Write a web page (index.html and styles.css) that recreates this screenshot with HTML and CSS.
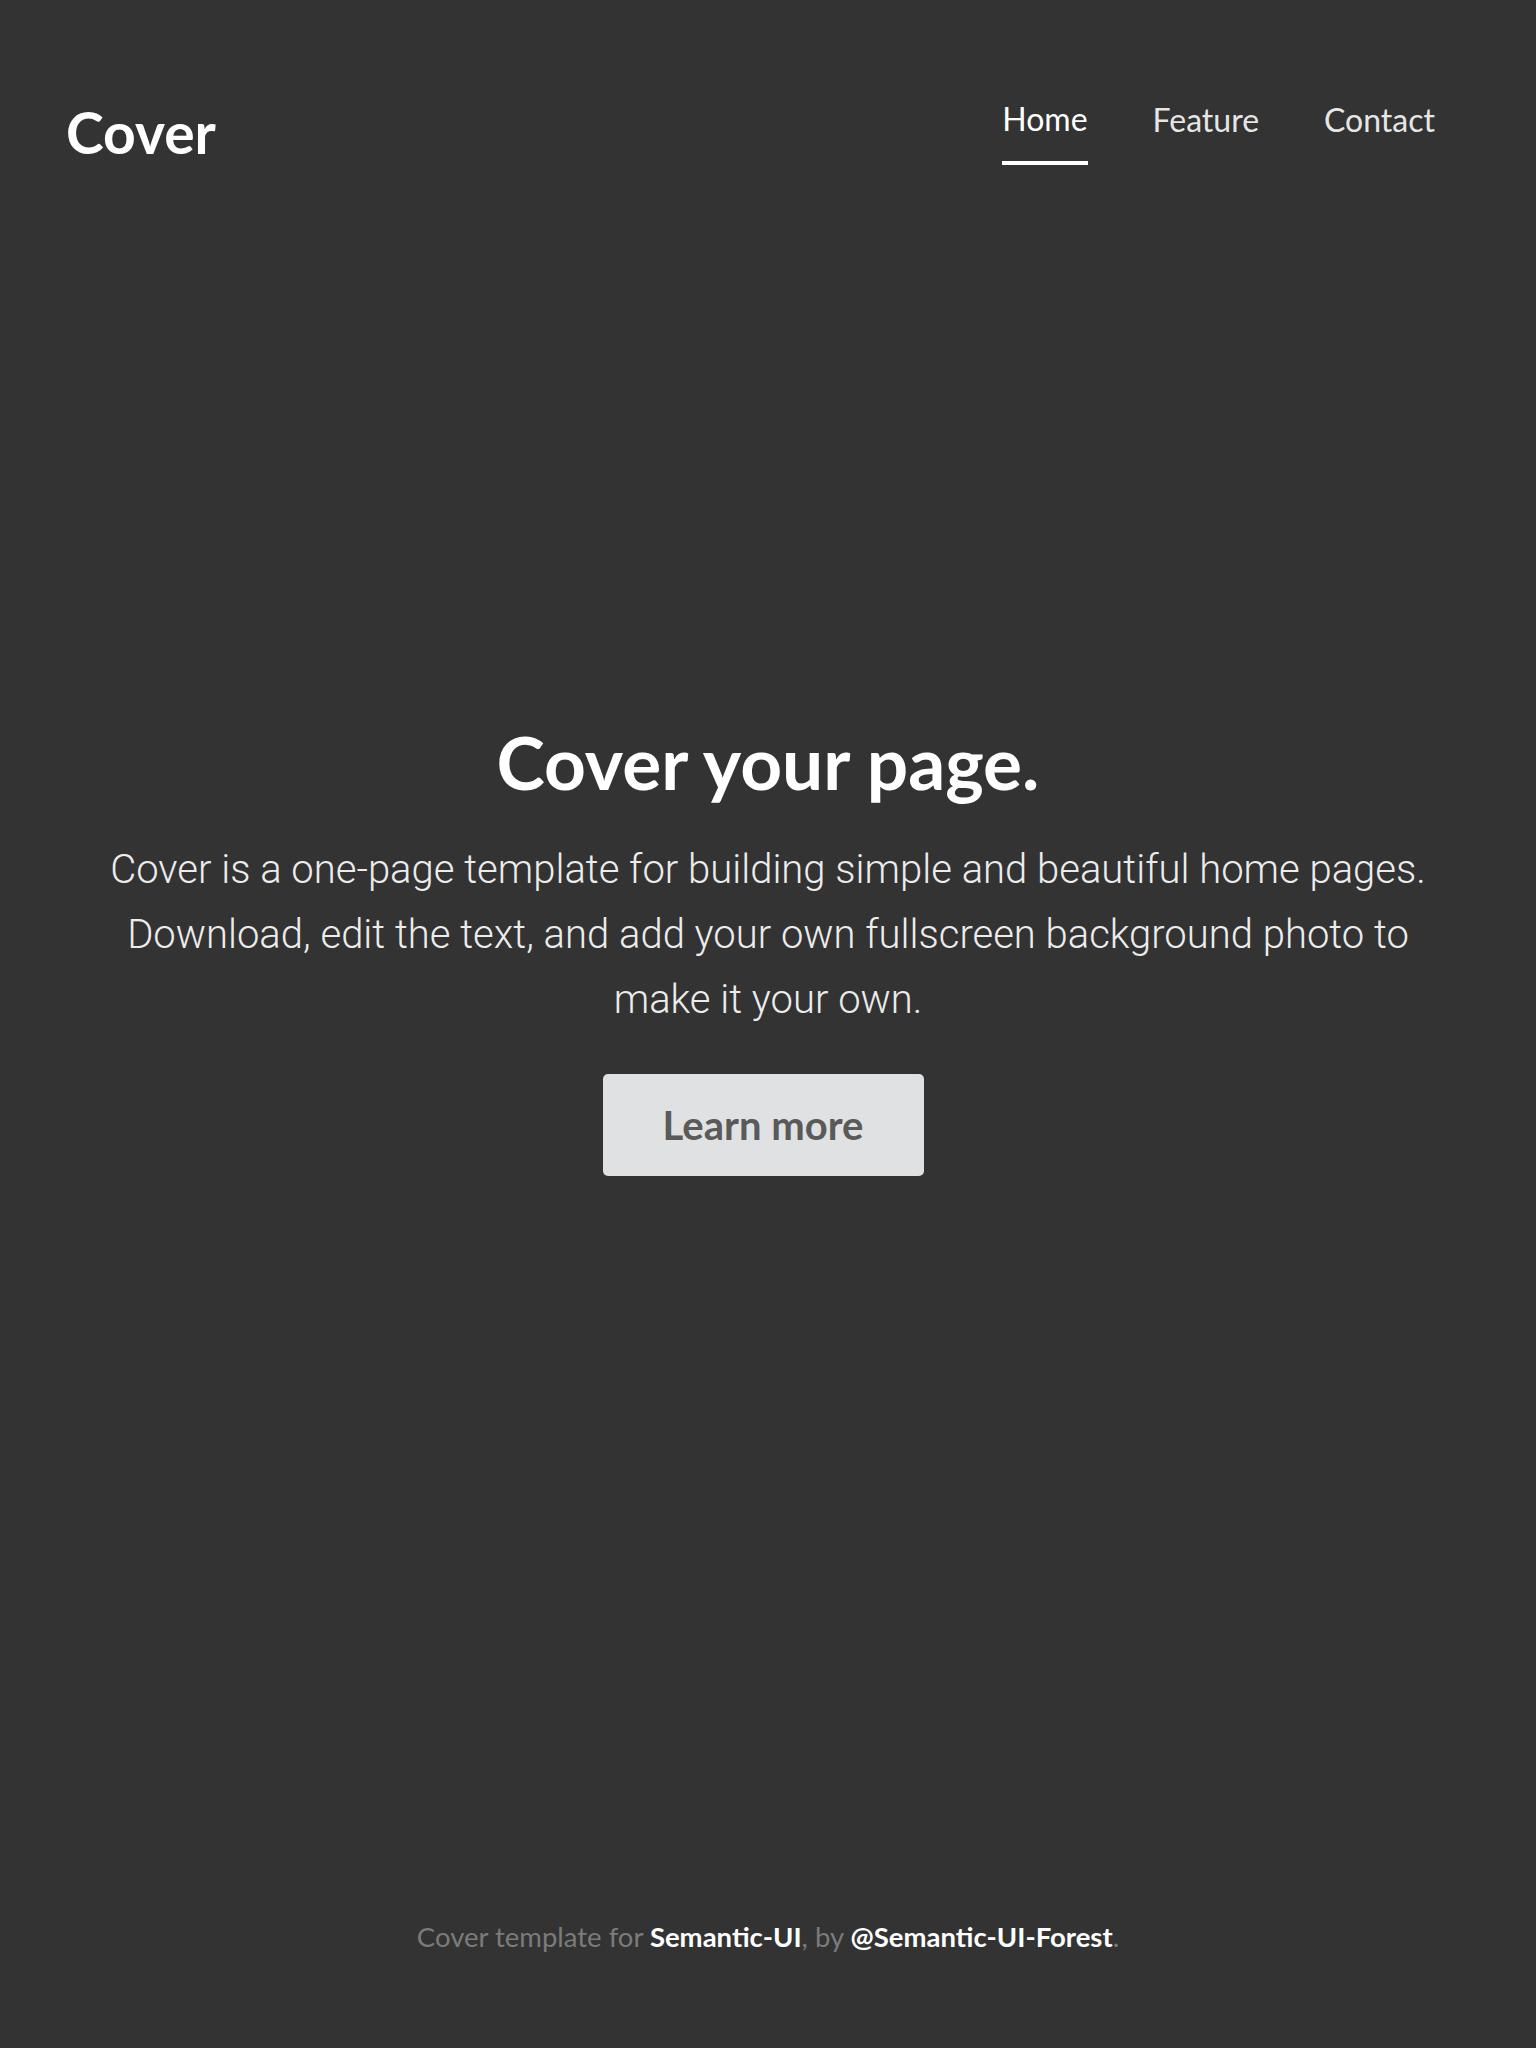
FILE: index.html
```html
<!DOCTYPE html>
<html lang="en">
<head>
<meta charset="utf-8">
<title>Cover</title>
<link rel="stylesheet" href="styles.css">
</head>
<body>
<div class="page">
  <header class="masthead">
    <h3 class="brand">Cover</h3>
    <nav class="nav">
      <a class="nav-item active" href="#">Home</a>
      <a class="nav-item" href="#">Feature</a>
      <a class="nav-item" href="#">Contact</a>
    </nav>
  </header>
  <main class="hero">
    <h1 class="hero-title">Cover your page.</h1>
    <p class="hero-text">Cover is a one-page template for building simple and beautiful home pages. Download, edit the text, and add your own fullscreen background photo to make it your own.</p>
    <a class="btn" href="#">Learn more</a>
  </main>
  <footer class="footer">
    <p>Cover template for <a href="#">Semantic-UI</a>, by <a href="#">@Semantic-UI-Forest</a>.</p>
  </footer>
</div>
</body>
</html>
```
FILE: styles.css
```css
html, body {
  margin: 0;
  padding: 0;
  background: #333333;
}
body {
  font-family: Lato, "Open Sans", sans-serif;
  color: #ffffff;
}
.page {
  min-height: 100vh;
  display: flex;
  flex-direction: column;
}
.masthead {
  display: flex;
  justify-content: space-between;
  align-items: flex-start;
  padding: 104px 101px 0 66px;
}
.brand {
  margin: 0;
  font-size: 57px;
  font-weight: 700;
  line-height: 1;
  color: #ffffff;
}
.nav {
  display: flex;
  gap: 65px;
  margin-top: -4px;
}
.nav-item {
  font-size: 32px;
  line-height: 1;
  color: #e6e6e6;
  text-decoration: none;
  padding: 4px 0 25px;
  border-bottom: 4px solid transparent;
}
.nav-item.active {
  color: #ffffff;
  border-bottom-color: #ffffff;
  padding-top: 3px;
}
.hero {
  flex: 1;
  display: flex;
  flex-direction: column;
  align-items: center;
  justify-content: center;
  text-align: center;
  padding: 0 100px 190px;
}
.hero-title {
  margin: 0 0 30px;
  font-size: 73px;
  font-weight: 700;
  line-height: 1.2;
}
.hero-text {
  max-width: 1335px;
  margin: 0 0 42px;
  font-family: Roboto, "Liberation Sans", sans-serif;
  font-weight: 300;
  font-size: 40px;
  line-height: 65px;
  color: #ececec;
}
.btn {
  display: inline-block;
  width: 321px;
  box-sizing: border-box;
  margin-right: 10px;
  padding: 29px 0;
  background: #e0e1e2;
  color: #5a5a5a;
  font-size: 40px;
  font-weight: 700;
  line-height: 44px;
  text-decoration: none;
  border-radius: 5px;
}
.footer {
  text-align: center;
  padding: 0 0 95px;
}
.footer p {
  margin: 0;
  font-size: 27.5px;
  line-height: 1.2;
  color: #7b7b7b;
}
.footer a {
  color: #ffffff;
  font-weight: 700;
  text-decoration: none;
}
```
